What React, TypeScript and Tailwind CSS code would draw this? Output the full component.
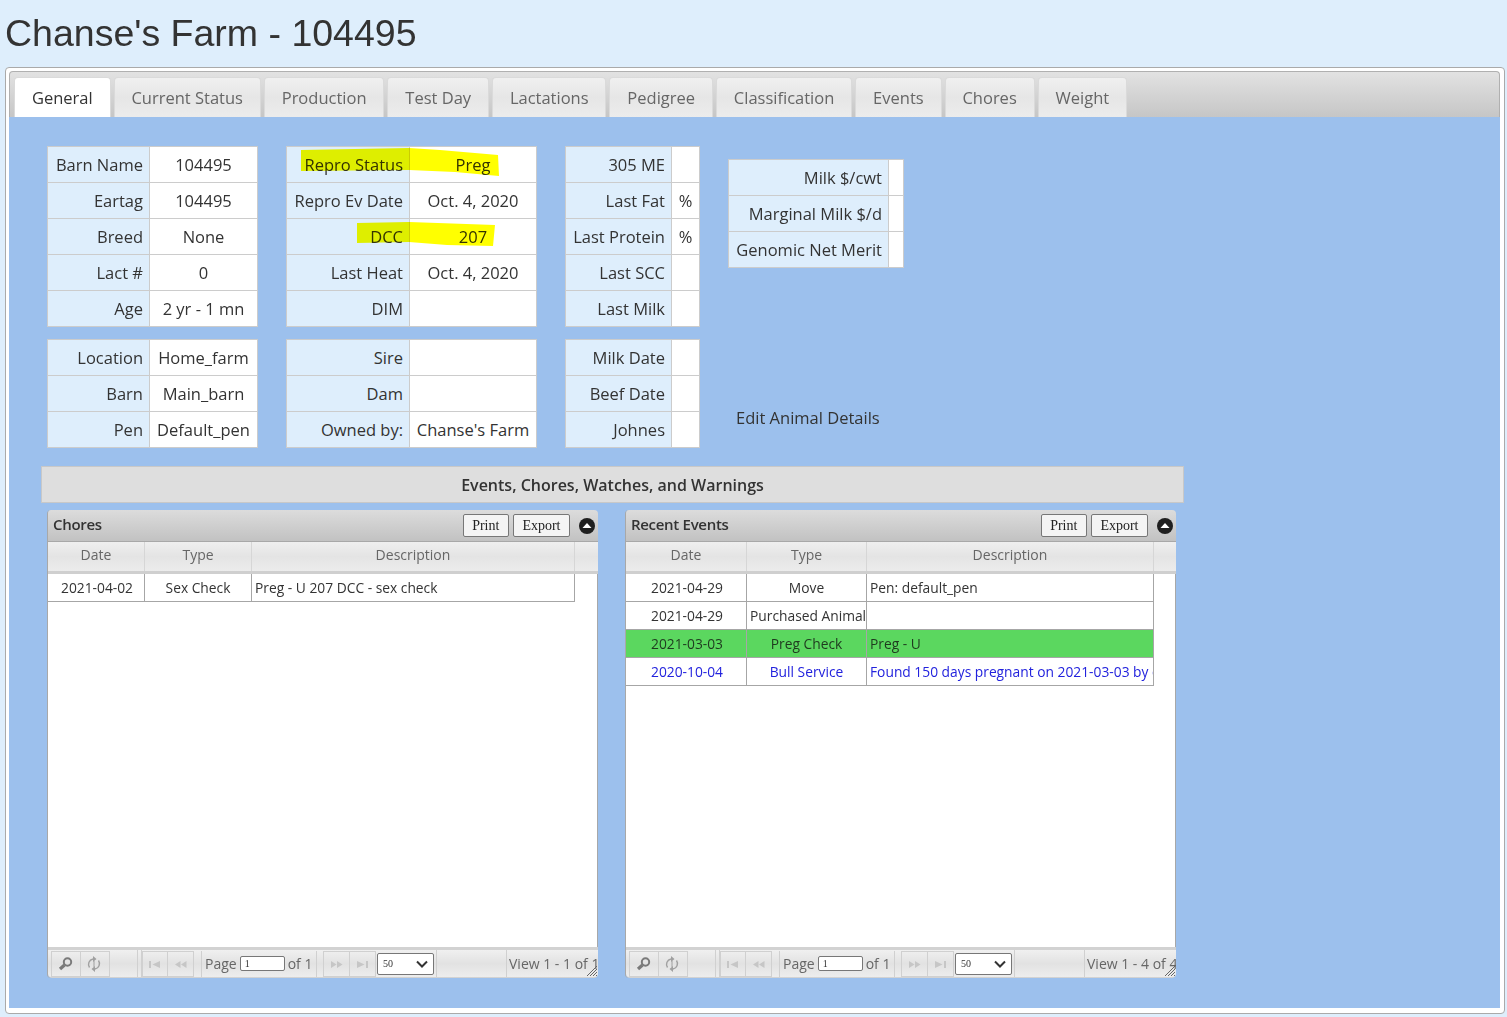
const TABS = ["General", "Current Status", "Production", "Test Day", "Lactations", "Pedigree", "Classification", "Events", "Chores", "Weight"];

type Pair = [string, string];

const COL_A: Pair[][] = [
  [["Barn Name", "104495"], ["Eartag", "104495"], ["Breed", "None"], ["Lact #", "0"], ["Age", "2 yr - 1 mn"]],
  [["Location", "Home_farm"], ["Barn", "Main_barn"], ["Pen", "Default_pen"]],
];
const COL_B: Pair[][] = [
  [["Repro Status", "Preg"], ["Repro Ev Date", "Oct. 4, 2020"], ["DCC", "207"], ["Last Heat", "Oct. 4, 2020"], ["DIM", ""]],
  [["Sire", ""], ["Dam", ""], ["Owned by:", "Chanse's Farm"]],
];
const COL_C: Pair[][] = [
  [["305 ME", ""], ["Last Fat", "%"], ["Last Protein", "%"], ["Last SCC", ""], ["Last Milk", ""]],
  [["Milk Date", ""], ["Beef Date", ""], ["Johnes", ""]],
];
const COL_D: Pair[] = [["Milk $/cwt", ""], ["Marginal Milk $/d", ""], ["Genomic Net Merit", ""]];

function InfoTable({ rows, labelW, valueW }: { rows: Pair[]; labelW: string; valueW: string }) {
  return (
    <div className="border border-[#cccccc] border-b-0 bg-white w-fit">
      {rows.map(([label, value]) => (
        <div key={label} className="flex h-9 border-b border-[#cccccc] text-[16.5px] leading-[35px] text-[#333333]">
          <div className={`${labelW} bg-[#deeefc] border-r border-[#cccccc] text-right pr-1.5 whitespace-nowrap`}>{label}</div>
          <div className={`${valueW} text-center whitespace-nowrap`}>{value}</div>
        </div>
      ))}
    </div>
  );
}

function SearchIcon() {
  return (
    <svg width="15" height="14" viewBox="0 0 15 14" fill="none" stroke="#7a7a7a" className="mr-0.5" aria-hidden>
      <circle cx="9.5" cy="5" r="3.7" strokeWidth="2" />
      <path d="M6.5 8 L2 12" strokeWidth="3.2" />
    </svg>
  );
}

function RefreshIcon() {
  return (
    <svg width="14" height="18" viewBox="0 0 14 18" fill="none" stroke="#a0a0a0" strokeWidth="1.4" className="mr-0.5" aria-hidden>
      <path d="M2.5 12.5 A5.5 5.5 0 0 1 6 4 M11.5 5.5 A5.5 5.5 0 0 1 8 14" />
      <path d="M6 1 L9.5 4 L6 7 Z M8 11 L4.5 14 L8 17 Z" fill="#a0a0a0" stroke="none" />
      <path d="M7 6 V12" strokeWidth="1" />
    </svg>
  );
}

function SeekIcon({ kind }: { kind: "first" | "prev" | "next" | "last" }) {
  const paths = {
    first: "M1 4h2v7H1z M12 4v7L4.5 7.5z",
    prev: "M1 7.5L6.5 4v7z M7 7.5L12.5 4v7z",
    next: "M1 4v7l5.5-3.5z M7 4v7l5.5-3.5z",
    last: "M1 4v7l7.5-3.5z M10 4h2v7h-2z",
  };
  return (
    <svg width="14" height="14" viewBox="0 0 14 14" fill="#c6c6c6" aria-hidden>
      <path d={paths[kind]} />
    </svg>
  );
}

function PagerCell({ children, w }: { children: React.ReactNode; w: string }) {
  return <div className={`${w} h-[26px] flex items-center justify-center border border-[#d0d0d0] -ml-px first:ml-0`}>{children}</div>;
}

function Pager({ view }: { view: string }) {
  return (
    <div className="relative h-[31px] shrink-0 flex items-center rounded-b border-t-[3px] border-b border-[#d2d2d2] bg-linear-to-b from-[#f0f0f0] via-[#e2e2e2] to-[#ededed] text-[14px] text-[#666666] overflow-hidden">
      <div className="w-[90px] h-full flex items-center pl-[3px] border-r border-[#d0d0d0] shrink-0">
        <PagerCell w="w-[30px]"><SearchIcon /></PagerCell>
        <PagerCell w="w-[30px]"><RefreshIcon /></PagerCell>
      </div>
      <div className="w-[296px] ml-[3px] h-full flex items-center border-x border-[#d0d0d0] shrink-0">
        <PagerCell w="w-[26px]"><SeekIcon kind="first" /></PagerCell>
        <PagerCell w="w-[27px]"><SeekIcon kind="prev" /></PagerCell>
        <div className="w-2 h-[26px] border-r border-[#d0d0d0]" />
        <div className="w-[114px] flex items-center pl-[3px] whitespace-nowrap">
          Page
          <input readOnly defaultValue="1" className="w-[45px] h-[15px] mx-[3px] border border-[#777777] rounded-[2px] bg-white pl-1 font-['Liberation_Serif',serif] text-[10px] text-[#333333]" />
          of 1
        </div>
        <div className="w-2 h-[26px] border-x border-[#d0d0d0]" />
        <PagerCell w="w-[27px]"><SeekIcon kind="next" /></PagerCell>
        <PagerCell w="w-[27px]"><SeekIcon kind="last" /></PagerCell>
        <div className="relative ml-px">
          <select defaultValue="50" className="block appearance-none w-[57px] h-[22px] pl-[5px] border border-[#777777] rounded-[2px] bg-white font-['Liberation_Serif',serif] text-[10px] text-[#333333]">
            <option value="50">50</option>
          </select>
          <svg width="12" height="8" viewBox="0 0 12 8" fill="none" stroke="#333333" strokeWidth="2" className="absolute right-1.5 top-[7px] pointer-events-none" aria-hidden>
            <path d="M1 1.5 L6 6.5 L11 1.5" />
          </svg>
        </div>
      </div>
      <div className="flex-1" />
      <div className="w-[92px] h-full flex items-center pl-0.5 border-l border-[#d0d0d0] whitespace-nowrap overflow-hidden shrink-0">{view}</div>
      <svg width="12" height="12" viewBox="0 0 12 12" className="absolute right-0 bottom-0" stroke="#666666" aria-hidden>
        <path d="M1 11 L11 1 M4 11 L11 4 M7 11 L11 7 M10 11 L11 10" />
      </svg>
    </div>
  );
}

type GridRow = { cells: string[]; tone?: "green" | "blue" };

function Grid({ title, rows, colW, view }: { title: string; rows: GridRow[]; colW: string[]; view: string }) {
  return (
    <div className="w-[551px] h-[468px] flex flex-col rounded-t rounded-b border-l border-[#a8a8a8] overflow-hidden">
      <div className="h-8 shrink-0 flex items-center justify-between pl-[5px] pr-[3px] bg-linear-to-b from-[#dcdcdc] to-[#c2c2c2] border-b border-[#a8a8a8] text-[15px] font-semibold text-[#333333] tracking-[-0.3px]">
        <span className="-mt-[2px]">{title}</span>
        <div className="flex items-center font-['Liberation_Serif',serif] font-normal text-[14px] tracking-normal text-[#222222]">
          <button className="h-[23px] px-[8.5px] mr-1 border border-[#777777] rounded-[2px] bg-[#f4f4f4]">Print</button>
          <button className="h-[23px] px-[8.5px] mr-[9px] border border-[#777777] rounded-[2px] bg-[#f4f4f4]">Export</button>
          <svg width="16" height="16" viewBox="0 0 16 16" aria-hidden>
            <circle cx="8" cy="8" r="8" fill="#1f1f1f" />
            <path d="M3.5 10 L8 5 L12.5 10 Z" fill="#ffffff" />
          </svg>
        </div>
      </div>
      <div className="h-8 shrink-0 flex bg-linear-to-b from-[#efefef] via-[#e4e4e4] to-[#ececec] border-b-[3px] border-[#cfcfcf] text-[14px] text-[#666666]">
        {["Date", "Type", "Description"].map((h, i) => (
          <div key={h} className={`${colW[i]} h-[29px] leading-[26px] text-center border-r border-[#d6d6d6]`}>{h}</div>
        ))}
      </div>
      <div className="flex-1 bg-white border-r border-[#a8a8a8]">
        {rows.map((row, r) => (
          <div
            key={r}
            className={`flex h-7 w-fit border-b border-[#a6a6a6] text-[13.8px] leading-[27px] ${row.tone === "green" ? "bg-[#5bd75f] text-[#1f3a1f]" : row.tone === "blue" ? "text-[#2222dd]" : "text-[#333333]"}`}
          >
            {row.cells.map((c, i) => (
              <div
                key={i}
                className={`${colW[i]} h-full border-r border-[#a6a6a6] whitespace-nowrap overflow-hidden ${i === 2 ? "pl-[3px] text-left" : i === 0 ? "pl-[5px] pr-[3px] text-center" : "px-[3px] text-center"}`}
              >
                {c}
              </div>
            ))}
          </div>
        ))}
      </div>
      <Pager view={view} />
    </div>
  );
}

export default function App() {
  return (
    <div className="w-[1507px] h-[1017px] bg-[#deeefc] font-['Open_Sans',sans-serif] overflow-hidden">
      <h1 className="h-[67px] flex items-center pl-[5px] font-['Liberation_Sans',sans-serif] text-[37.5px] text-[#333333]">Chanse's Farm - 104495</h1>
      <div className="ml-[5px] w-[1500px] h-[947px] flex flex-col pt-[3px] pl-[3px] pr-[4px] pb-[5px] bg-white border border-[#aaaaaa] rounded">
        <div className="h-[46px] shrink-0 flex items-end gap-[3px] pl-[4px] rounded-t border border-b-0 border-[#b0b0b0] bg-linear-to-b from-[#e2e2e2] to-[#c6c6c6]">
          {TABS.map((t, i) => (
            <div
              key={t}
              className={`h-10 px-[16.9px] leading-[40px] text-[16.5px] rounded-t border border-b-0 border-[#dadada] ${i === 0 ? "bg-white text-[#333333]" : "bg-linear-to-b from-[#f0f0f0] via-[#e6e6e6] to-[#ececec] text-[#666666]"}`}
            >
              {t}
            </div>
          ))}
        </div>
        <div className="flex-1 bg-[#9cc0ed] pl-[38px] pt-[29px]">
          <div className="flex gap-7 h-[320px]">
            <div className="flex flex-col gap-3">
              {COL_A.map((rows, i) => <InfoTable key={i} rows={rows} labelW="w-[102px]" valueW="w-[107px]" />)}
            </div>
            <div className="flex flex-col gap-3">
              {COL_B.map((rows, i) => (
                <div key={i} className="relative">
                  <InfoTable rows={rows} labelW="w-[123px]" valueW="w-[126px]" />
                  {i === 0 && (
                    <svg width="251" height="110" className="absolute left-0 top-0 pointer-events-none mix-blend-multiply" fill="#ffff00" aria-hidden>
                      <polygon points="15,4 123,2 154,4 212,9 213,30 169,26 123,24 15,25" />
                      <polygon points="71,77 123,76 209,79 207,100 161,99 123,96 71,97" />
                    </svg>
                  )}
                </div>
              ))}
            </div>
            <div className="flex flex-col gap-3">
              {COL_C.map((rows, i) => <InfoTable key={i} rows={rows} labelW="w-[106px]" valueW="w-[27px]" />)}
            </div>
            <div className="flex flex-col pt-[13px]">
              <InfoTable rows={COL_D} labelW="w-[160px]" valueW="w-[14px]" />
              <div className="mt-[138px] pl-2 text-[16.5px] leading-6 text-[#333333]">Edit Animal Details</div>
            </div>
          </div>
          <div className="-ml-[6px] w-[1143px] h-[37px] flex items-center justify-center bg-[#dedede] border border-[#c8c8c8] text-[16px] font-semibold text-[#333333]">
            Events, Chores, Watches, and Warnings
          </div>
          <div className="flex gap-[27px] mt-[7px]">
            <Grid
              title="Chores"
              rows={[{ cells: ["2021-04-02", "Sex Check", "Preg - U 207 DCC - sex check"] }]}
              colW={["w-[97px]", "w-[107px]", "w-[323px]"]}
              view="View 1 - 1 of 1"
            />
            <Grid
              title="Recent Events"
              rows={[
                { cells: ["2021-04-29", "Move", "Pen: default_pen"] },
                { cells: ["2021-04-29", "Purchased Animal", ""] },
                { cells: ["2021-03-03", "Preg Check", "Preg - U"], tone: "green" },
                { cells: ["2020-10-04", "Bull Service", "Found 150 days pregnant on 2021-03-03 by check"], tone: "blue" },
              ]}
              colW={["w-[121px]", "w-[120px]", "w-[287px]"]}
              view="View 1 - 4 of 4"
            />
          </div>
        </div>
      </div>
    </div>
  );
}
